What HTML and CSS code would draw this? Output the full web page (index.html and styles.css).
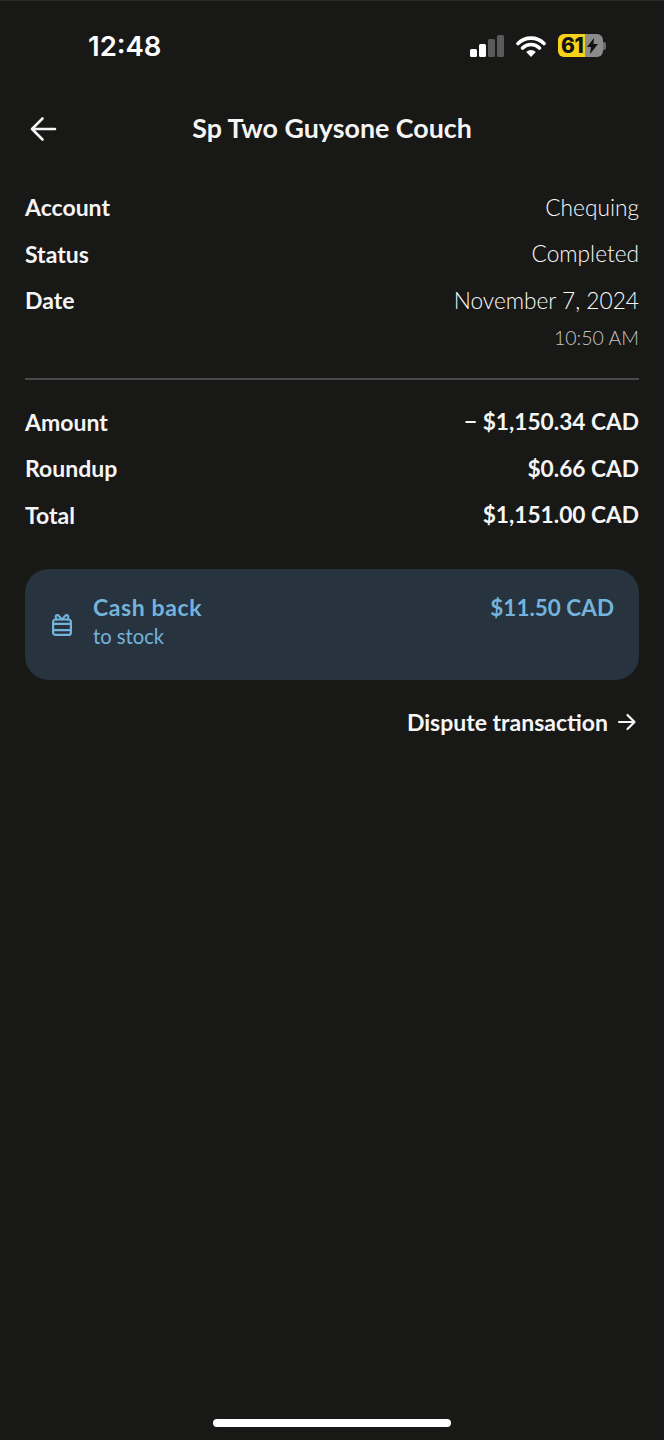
FILE: index.html
```html
<!DOCTYPE html>
<html lang="en">
<head>
<meta charset="utf-8">
<title>Transaction</title>
<link rel="stylesheet" href="styles.css">
</head>
<body>
<div class="screen">
  <div class="status">
    <span class="clock">12:48</span>
    <div class="indicators">
      <svg class="signal" width="34" height="22" viewBox="0 0 34 22"><rect x="0" y="14" width="7" height="8" rx="1.5" fill="#fff"/><rect x="9" y="9" width="7" height="13" rx="1.5" fill="#fff"/><rect x="18" y="4" width="7" height="18" rx="1.5" fill="#5a5a5a"/><rect x="27" y="0" width="7" height="22" rx="1.5" fill="#5a5a5a"/></svg>
      <svg class="wifi" width="30" height="22" viewBox="0 0 30 22"><path d="M2 8.500a18.500 18.500 0 0 1 26 0M6.600 13a12 12 0 0 1 16.800 0" fill="none" stroke="#fff" stroke-width="3.600" stroke-linecap="round"/><path d="M15 22l-4.800-5a6.800 6.800 0 0 1 9.600 0z" fill="#fff"/></svg>
      <div class="battery">
        <div class="cell"><span class="level">61</span><svg class="bolt" width="11" height="16" viewBox="0 0 11 16"><path d="M7 0L0 9h4l-1 7 8-10H6.500z" fill="#111"/></svg></div>
        <span class="nub"></span>
      </div>
    </div>
  </div>

  <header class="nav">
    <svg class="back" width="28" height="28" viewBox="0 0 28 28"><path d="M26 14H3M13.500 3.500L3 14l10.500 10.500" fill="none" stroke="#f5f5f5" stroke-width="2.600" stroke-linecap="round" stroke-linejoin="round"/></svg>
    <h1 class="title">Sp Two Guysone Couch</h1>
  </header>

  <section class="details">
    <div class="row"><span class="label">Account</span><span class="value">Chequing</span></div>
    <div class="row"><span class="label">Status</span><span class="value">Completed</span></div>
    <div class="row"><span class="label">Date</span><span class="value">November 7, 2024</span></div>
    <div class="time">10:50 AM</div>
  </section>

  <hr class="rule">

  <section class="amounts">
    <div class="row"><span class="label">Amount</span><span class="label figure">− $1,150.34 CAD</span></div>
    <div class="row"><span class="label">Roundup</span><span class="label figure">$0.66 CAD</span></div>
    <div class="row"><span class="label">Total</span><span class="label figure">$1,151.00 CAD</span></div>
  </section>

  <div class="cashback">
    <svg class="gift" width="20" height="22" viewBox="0 0 20 22"><g fill="none" stroke="#73b3dc" stroke-width="2.200" stroke-linejoin="round" stroke-linecap="round"><rect x="1.100" y="5.500" width="17.800" height="15.400" rx="2.500"/><path d="M1.500 9.800h17M1.500 16.200h17"/><path d="M10 5.500L6.200 1.300C5 .5 3.600 1.500 3.800 3.200L4.500 5.500M10 5.500l3.800-4.200c1.200-.8 2.600.2 2.400 1.900L15.500 5.500"/></g></svg>
    <div class="cash-text">
      <div class="cash-title">Cash back</div>
      <div class="cash-sub">to stock</div>
    </div>
    <div class="cash-amount">$11.50 CAD</div>
  </div>

  <div class="dispute">
    <span>Dispute transaction</span>
    <svg width="20" height="20" viewBox="0 0 20 20"><path d="M2 10h15M10.500 3l7 7-7 7" fill="none" stroke="#f5f5f5" stroke-width="2.200" stroke-linecap="round" stroke-linejoin="round"/></svg>
  </div>

  <div class="spacer"></div>
  <div class="home"></div>
</div>
</body>
</html>
```

FILE: styles.css
```css
* { box-sizing: border-box; }
html, body { margin: 0; padding: 0; }
body { background: #181817; font-family: "Lato", "Liberation Sans", sans-serif; color: #f5f5f5; }
.screen { width: 664px; height: 1440px; display: flex; flex-direction: column; background: #181817; border-top: 1px solid #2c2c2c; }
.status { height: 89px; padding: 0 58px 0 88px; display: flex; align-items: center; justify-content: space-between; }
.clock { font-family: "Inter", sans-serif; font-size: 27.500px; font-weight: 600; color: #fff; }
.indicators { display: flex; align-items: center; gap: 12px; }
.signal { width: 34px; height: 22px; }
.battery { display: flex; align-items: center; }
.cell { width: 45px; height: 23px; border-radius: 6px; display: flex; align-items: center; padding-left: 3px; background: linear-gradient(90deg, #f7d21b 0 61%, #8b8b8b 61% 100%); position: relative; }
.level { font-family: "Inter", sans-serif; font-size: 21px; font-weight: 800; color: #111; line-height: 23px; letter-spacing: -0.5px; }
.bolt { position: absolute; left: 29px; top: 3.500px; }
.nub { width: 3px; height: 8px; background: #6a6a6a; border-radius: 0 2px 2px 0; }
.nav { height: 80px; padding-left: 29px; display: flex; align-items: center; position: relative; }
.back { flex: none; position: relative; top: -1px; }
.title { position: absolute; left: 0; right: 0; top: 0; bottom: 0; margin: 0; display: flex; align-items: center; justify-content: center; font-size: 26.800px; font-weight: 700; color: #f5f5f5; padding-bottom: 5px; }
.details { padding: 0 25px; margin-top: 14px; display: flex; flex-direction: column; }
.row { height: 46.500px; display: flex; align-items: center; justify-content: space-between; }
.label { font-size: 23px; font-weight: 700; color: #f5f5f5; }
.figure { font-size: 22.700px; }
.value { font-size: 22.700px; font-weight: 300; color: #fafafa; }
.time { text-align: right; font-size: 19.500px; font-weight: 300; color: #c4c4c4; line-height: 24px; margin-top: 2px; }
.rule { width: 614px; height: 2px; margin: 28px 0 0 25px; border: 0; background: #4a4a4a; }
.amounts { padding: 0 25px; margin-top: 19px; display: flex; flex-direction: column; }
.cashback { margin: 31px 25px 0; height: 111px; border-radius: 24px; background: #27333e; color: #73b3dc; display: flex; padding: 0 25px 0 27px; }
.gift { flex: none; align-self: center; margin-right: 21px; }
.cash-text { display: flex; flex-direction: column; padding-top: 24px; }
.cash-title { font-size: 23px; font-weight: 700; line-height: 29px; letter-spacing: 0.6px; }
.cash-sub { font-size: 20.200px; font-weight: 400; line-height: 29px; }
.cash-amount { margin-left: auto; padding-top: 24px; font-size: 22.500px; font-weight: 700; line-height: 29px; }
.dispute { margin: 27px 27px 0 0; display: flex; justify-content: flex-end; align-items: center; gap: 9px; font-size: 23px; font-weight: 700; line-height: 30px; color: #f5f5f5; }
.spacer { flex: 1; }
.home { flex: none; width: 238px; height: 8px; border-radius: 4px; background: #fff; margin: 0 auto 13px; }
```
